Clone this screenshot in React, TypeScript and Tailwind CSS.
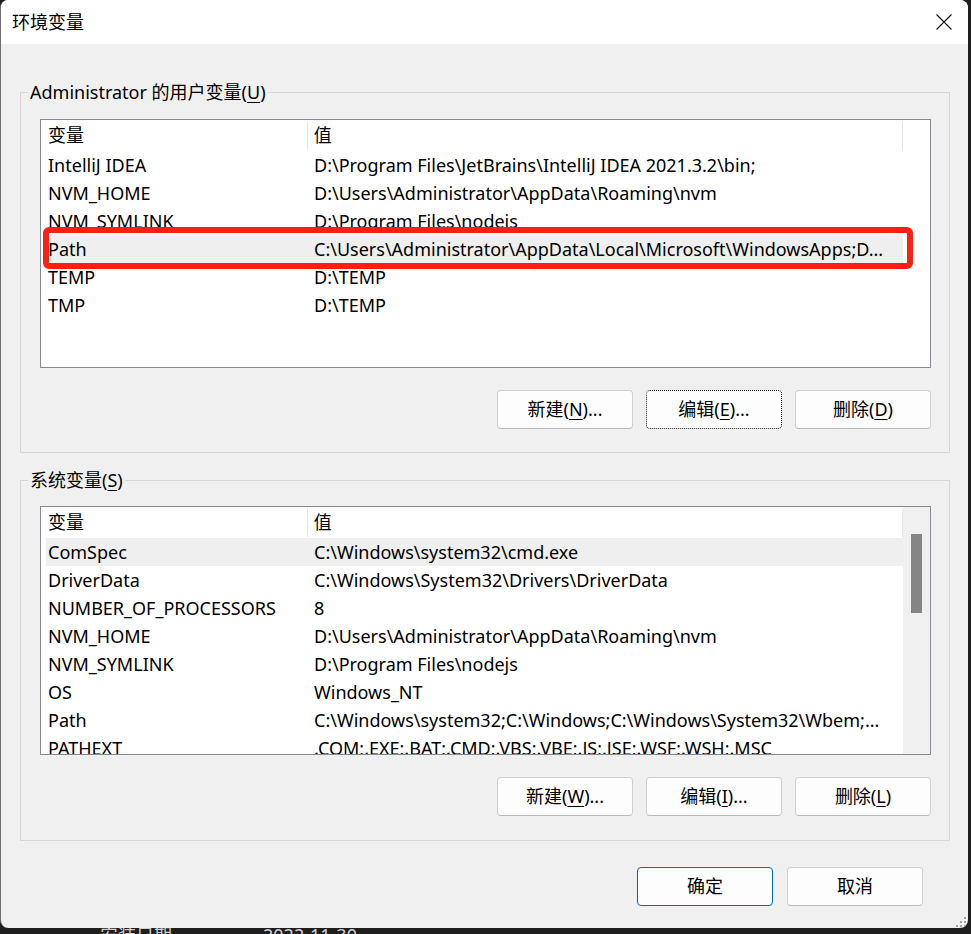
import React from 'react';

type Item = { name: string; value: string; hl?: boolean };

const userVars: Item[] = [
  { name: 'IntelliJ IDEA', value: 'D:\\Program Files\\JetBrains\\IntelliJ IDEA 2021.3.2\\bin;' },
  { name: 'NVM_HOME', value: 'D:\\Users\\Administrator\\AppData\\Roaming\\nvm' },
  { name: 'NVM_SYMLINK', value: 'D:\\Program Files\\nodejs' },
  { name: 'Path', value: 'C:\\Users\\Administrator\\AppData\\Local\\Microsoft\\WindowsApps;D...', hl: true },
  { name: 'TEMP', value: 'D:\\TEMP' },
  { name: 'TMP', value: 'D:\\TEMP' },
];

const sysVars: Item[] = [
  { name: 'ComSpec', value: 'C:\\Windows\\system32\\cmd.exe', hl: true },
  { name: 'DriverData', value: 'C:\\Windows\\System32\\Drivers\\DriverData' },
  { name: 'NUMBER_OF_PROCESSORS', value: '8' },
  { name: 'NVM_HOME', value: 'D:\\Users\\Administrator\\AppData\\Roaming\\nvm' },
  { name: 'NVM_SYMLINK', value: 'D:\\Program Files\\nodejs' },
  { name: 'OS', value: 'Windows_NT' },
  { name: 'Path', value: 'C:\\Windows\\system32;C:\\Windows;C:\\Windows\\System32\\Wbem;...' },
  { name: 'PATHEXT', value: '.COM;.EXE;.BAT;.CMD;.VBS;.VBE;.JS;.JSE;.WSF;.WSH;.MSC' },
];

const Key = ({ k }: { k: string }) => (
  <span className="underline decoration-1 underline-offset-[3px]">{k}</span>
);

const Btn = ({ children, kind }: { children: React.ReactNode; kind?: 'focus' | 'primary' }) => {
  let border = 'border border-[#d0d0d0] border-b-[#b9b9b9]';
  if (kind === 'focus') border = 'border border-dotted border-[#1a1a1a]';
  if (kind === 'primary') border = 'border border-[#0067c0]';
  return (
    <button className={`w-[136px] h-[39px] rounded-[4px] bg-[#fdfdfd] flex items-center justify-center text-[18px] text-black ${border}`}>
      {children}
    </button>
  );
};

const VarList = ({ items, scroll, marker }: { items: Item[]; scroll?: boolean; marker?: boolean }) => (
  <div className="relative h-[249px] w-[891px] border border-[#878a90] bg-white flex overflow-hidden">
    <div className="w-[862px] flex flex-col">
      <div className="flex h-[31px] shrink-0 items-center">
        <div className="w-[266px] pl-[7px]">变量</div>
        <div className="w-px h-[28px] bg-[#e5e5e5]" />
        <div className="w-[595px] pl-[6px]">值</div>
        <div className="w-px h-[28px] bg-[#e5e5e5]" />
      </div>
      {items.map((it) => (
        <div
          key={it.name}
          className={`flex h-[28px] shrink-0 items-center ml-[5px] w-[857px] ${it.hl ? 'bg-[#efefef]' : ''}`}
        >
          <div className="w-[261px] pl-[2px] whitespace-nowrap overflow-hidden">{it.name}</div>
          <div className="flex-1 pl-[7px] whitespace-nowrap overflow-hidden">{it.value}</div>
        </div>
      ))}
    </div>
    {scroll && (
      <div className="w-[27px] bg-[#f0f0f0] pt-[27px] px-[8px]">
        <div className="w-[11px] h-[79px] bg-[#858585]" />
      </div>
    )}
    {marker && (
      <div className="absolute left-[2px] top-[107px] w-[870px] h-[42px] border-[6px] border-[#ff1f12] rounded-[6px]" />
    )}
  </div>
);

const Group = ({ title, children }: { title: React.ReactNode; children: React.ReactNode }) => (
  <fieldset className="border border-[#d6d6d6] p-0">
    <legend className="ml-[7px] px-[2px] leading-[24px]">{title}</legend>
    <div className="pl-[19px] pr-[18px]">{children}</div>
  </fieldset>
);

export default function App() {
  return (
    <div className="w-[971px] h-[934px] bg-[#1e1e1e] overflow-hidden font-['Noto_Sans','Noto_Sans_CJK_SC',sans-serif] text-[18px] text-black">
      <div className="relative w-[968px] h-[928px] rounded-[8px] overflow-hidden bg-[#f0f0f0] border-l border-[#6e6e6e] flex flex-col">
        <div className="h-[44px] shrink-0 bg-white flex items-center justify-between pl-[11px] pr-[15px]">
          <span>环境变量</span>
          <svg width="16" height="16" viewBox="0 0 16 16" className="mr-[1px]">
            <path d="M0.5 0.5 L15.5 15.5 M15.5 0.5 L0.5 15.5" stroke="#111" strokeWidth="1.1" fill="none" />
          </svg>
        </div>

        <div className="flex-1 pt-[36px] pl-[19px] pr-[18px] flex flex-col">
          <Group title={<>Administrator 的用户变量(<Key k="U" />)</>}>
            <div className="pt-[15px] pb-[23px] flex flex-col">
              <VarList items={userVars} marker />
              <div className="mt-[22px] flex justify-end gap-[13px]">
                <Btn>新建(<Key k="N" />)...</Btn>
                <Btn kind="focus">编辑(<Key k="E" />)...</Btn>
                <Btn>删除(<Key k="D" />)</Btn>
              </div>
            </div>
          </Group>

          <div className="h-[15px]" />

          <Group title={<>系统变量(<Key k="S" />)</>}>
            <div className="pt-[14px] pb-[24px] flex flex-col">
              <VarList items={sysVars} scroll />
              <div className="mt-[22px] flex justify-end gap-[13px]">
                <Btn>新建(<Key k="W" />)...</Btn>
                <Btn>编辑(<Key k="I" />)...</Btn>
                <Btn>删除(<Key k="L" />)</Btn>
              </div>
            </div>
          </Group>

          <div className="mt-[26px] flex justify-end gap-[14px] pr-[27px]">
            <Btn kind="primary">确定</Btn>
            <Btn>取消</Btn>
          </div>
        </div>

        <svg width="12" height="10" viewBox="0 0 12 10" className="absolute right-[1px] bottom-[1px]">
          <g fill="#a3a3a3">
            <rect x="9" y="0" width="2" height="2" />
            <rect x="5" y="4" width="2" height="2" />
            <rect x="9" y="4" width="2" height="2" />
            <rect x="1" y="8" width="2" height="2" />
            <rect x="5" y="8" width="2" height="2" />
            <rect x="9" y="8" width="2" height="2" />
          </g>
        </svg>
      </div>

      <div className="h-[6px] overflow-hidden flex text-[#cfcfcf] leading-[18px]">
        <span className="ml-[100px] -mt-[2px]">安装日期</span>
        <span className="ml-[91px] -mt-[2px]">2022-11-30</span>
      </div>
    </div>
  );
}
